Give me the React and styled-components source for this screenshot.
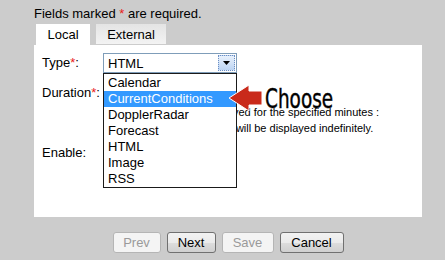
import React from 'react';
import styled, { createGlobalStyle } from 'styled-components';

const GlobalStyle = createGlobalStyle`
  html, body {
    margin: 0;
    padding: 0;
    background: #cccccc;
    font-family: 'Liberation Sans', Arial, sans-serif;
    color: #000;
  }
`;

const Page = styled.div`
  width: 388px;
  padding: 6px 0 0 34px;
  font-size: 13px;
`;

const Required = styled.div`
  line-height: 16px;
  height: 18px;
`;

const Star = styled.span`
  color: #e8201a;
`;

const Tabs = styled.div`
  display: flex;
  gap: 6px;
  padding-left: 2px;
  height: 21px;
`;

const Tab = styled.div`
  width: ${p => p.$w}px;
  height: ${p => (p.$active ? 21 : 20)}px;
  display: flex;
  align-items: center;
  justify-content: center;
  background: ${p => (p.$active ? '#fff' : 'linear-gradient(#e4e4e4, #f3f3f3)')};
  line-height: 16px;
  padding-top: 1px;
  box-sizing: border-box;
`;

const Panel = styled.div`
  position: relative;
  background: #fff;
  height: 172px;
  box-sizing: border-box;
  padding: 8px 8px;
`;

const Row = styled.div`
  display: grid;
  grid-template-columns: 61px 1fr;
  margin-top: ${p => p.$top || 0}px;
`;

const Label = styled.div`
  line-height: ${p => p.$lh || 18}px;
`;

const Select = styled.div`
  width: 134px;
  height: 20px;
  box-sizing: border-box;
  border: 1px solid #7f9db9;
  display: flex;
  align-items: center;
  background: #fff;
`;

const SelectText = styled.div`
  flex: 1;
  padding-left: 4px;
  font-size: 13px;
`;

const DropButton = styled.div`
  width: 17px;
  height: 16px;
  margin-right: 1px;
  box-sizing: border-box;
  border: 1px dotted #6d8fc4;
  background: linear-gradient(#e8f1fc, #bcd4f3);
  display: flex;
  align-items: center;
  justify-content: center;
`;

const Input = styled.div`
  width: 40px;
  height: 18px;
  border: 1px solid #7f9db9;
  box-sizing: border-box;
`;

const Note = styled.div`
  font-size: 11px;
  line-height: 16px;
  padding-left: ${p => p.$indent}px;
  white-space: nowrap;
  margin-top: ${p => p.$top || 0}px;
`;

const List = styled.ul`
  position: absolute;
  left: 69px;
  top: 28px;
  width: 134px;
  margin: 0;
  padding: 1px 0 0;
  list-style: none;
  background: #fff;
  border: 1px solid #1a1a1a;
  box-sizing: border-box;
  height: 115px;
`;

const Item = styled.li`
  height: 16px;
  line-height: 16px;
  padding-left: 4px;
  font-size: 13px;
  background: ${p => (p.$selected ? '#3399ff' : 'transparent')};
  color: ${p => (p.$selected ? '#fff' : '#000')};
`;

const Callout = styled.div`
  position: absolute;
  left: 194px;
  top: 39px;
  display: flex;
  align-items: center;
  gap: 1px;
`;

const ChooseText = styled.span`
  display: inline-block;
  font-family: 'DejaVu Sans Condensed', 'DejaVu Sans', sans-serif;
  font-stretch: condensed;
  font-size: 27px;
  line-height: 28px;
  -webkit-text-stroke: 0.4px #000;
  transform: scaleX(0.76);
  transform-origin: left center;
`;

const Buttons = styled.div`
  display: flex;
  justify-content: center;
  gap: 6px;
  margin-top: 15px;
`;

const Button = styled.button`
  width: ${p => p.$w}px;
  height: 21px;
  padding: 0;
  font-family: 'Liberation Sans', Arial, sans-serif;
  font-size: 13px;
  border-radius: 3px;
  border: 1px solid ${p => (p.disabled ? '#b5b5b5' : '#707070')};
  background: ${p => (p.disabled ? '#f4f4f4' : 'linear-gradient(#f2f2f2, #ebebeb 50%, #dddddd 51%, #cfcfcf)')};
  color: ${p => (p.disabled ? '#9a9a9a' : '#000')};
`;

const options = ['Calendar', 'CurrentConditions', 'DopplerRadar', 'Forecast', 'HTML', 'Image', 'RSS'];

const Arrow = () => (
  <svg width="36" height="30" viewBox="0 0 36 30">
    <polygon
      points="1,14 21,1 21,7 34,7 34,21 21,21 21,27"
      fill="#c92a1b"
      stroke="#fff"
      strokeWidth="1"
    />
  </svg>
);

const App = () => (
  <>
    <GlobalStyle />
    <Page>
      <Required>
        Fields marked <Star>*</Star> are required.
      </Required>
      <Tabs>
        <Tab $w={54} $active>Local</Tab>
        <Tab $w={70}>External</Tab>
      </Tabs>
      <Panel>
        <Row>
          <Label $lh={20}>
            Type<Star>*</Star>:
          </Label>
          <Select>
            <SelectText>HTML</SelectText>
            <DropButton>
              <svg width="7" height="4" viewBox="0 0 7 4">
                <polygon points="0,0 7,0 3.5,4" fill="#000" />
              </svg>
            </DropButton>
          </Select>
        </Row>
        <Row $top={11}>
          <Label>
            Duration<Star>*</Star>:
          </Label>
          <div>
            <Input />
            <Note $top={2} $indent={26}>Content will be displayed for the specified minutes :</Note>
            <Note $indent={31}>If empty, the content will be displayed indefinitely.</Note>
          </div>
        </Row>
        <Row $top={8}>
          <Label>Enable:</Label>
          <div />
        </Row>
        <List>
          {options.map(o => (
            <Item key={o} $selected={o === 'CurrentConditions'}>
              {o}
            </Item>
          ))}
        </List>
        <Callout>
          <Arrow />
          <ChooseText>Choose</ChooseText>
        </Callout>
      </Panel>
      <Buttons>
        <Button $w={48} disabled>Prev</Button>
        <Button $w={49}>Next</Button>
        <Button $w={52} disabled>Save</Button>
        <Button $w={64}>Cancel</Button>
      </Buttons>
    </Page>
  </>
);

export default App;
